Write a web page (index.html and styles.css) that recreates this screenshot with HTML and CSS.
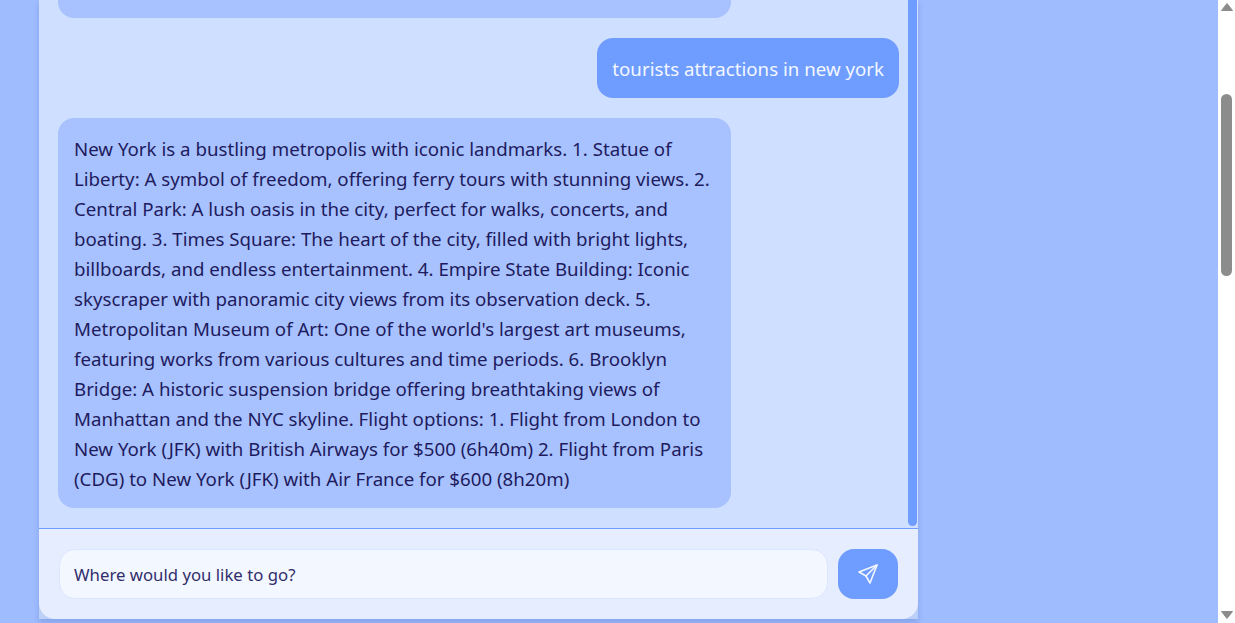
FILE: index.html
```html
<!DOCTYPE html>
<html lang="en">
<head>
    <meta charset="UTF-8">
    <meta name="viewport" content="width=device-width, initial-scale=1.0">
    <title>Travel Chat</title>
    <link rel="stylesheet" href="styles.css">
</head>
<body>
    <div class="page">
        <div class="chat-card">
            <div class="messages">
                <div class="bubble bot">Here are some places you may enjoy on your trip, a</div>
                <div class="bubble user">tourists attractions in new york</div>
                <div class="bubble bot">New York is a bustling metropolis with iconic landmarks. 1. Statue of Liberty: A symbol of freedom, offering ferry tours with stunning views. 2. Central Park: A lush oasis in the city, perfect for walks, concerts, and boating. 3. Times Square: The heart of the city, filled with bright lights, billboards, and endless entertainment. 4. Empire State Building: Iconic skyscraper with panoramic city views from its observation deck. 5. Metropolitan Museum of Art: One of the world's largest art museums, featuring works from various cultures and time periods. 6. Brooklyn Bridge: A historic suspension bridge offering breathtaking views of Manhattan and the NYC skyline. Flight options: 1. Flight from London to New York (JFK) with British Airways for $500 (6h40m) 2. Flight from Paris (CDG) to New York (JFK) with Air France for $600 (8h20m)</div>
                <div class="chat-scrollbar"></div>
            </div>
            <form class="input-bar">
                <input class="chat-input" type="text" placeholder="Where would you like to go?">
                <button class="send-btn" type="button" aria-label="Send">
                    <svg width="24" height="24" viewBox="0 0 24 24" fill="none" stroke="currentColor" stroke-width="1.6" stroke-linecap="round" stroke-linejoin="round">
                        <path d="M21 3 L3 10 L10 14 L14 21 Z"></path>
                        <path d="M21 3 L10 14"></path>
                    </svg>
                </button>
            </form>
        </div>
    </div>
    <div class="page-scrollbar">
        <svg class="arrow" width="14" height="10" viewBox="0 0 14 10"><path d="M7 1.5 L12.5 8.5 H1.5 Z"></path></svg>
        <div class="track"><div class="thumb"></div></div>
        <svg class="arrow" width="14" height="10" viewBox="0 0 14 10"><path d="M7 8.5 L12.5 1.5 H1.5 Z"></path></svg>
    </div>
</body>
</html>
```

FILE: styles.css
```css
* {
    box-sizing: border-box;
}
html, body {
    height: 100%;
}
body {
    margin: 0;
    display: flex;
    overflow: hidden;
    background: #9fbcff;
    font-family: "Noto Sans", "Open Sans", sans-serif;
    font-size: 18.7px;
    line-height: 30px;
}
.page {
    flex: 1;
    min-width: 0;
    padding: 0 300px 4px 39px;
    height: 100%;
}
.chat-card {
    width: 879px;
    height: 100%;
    display: flex;
    flex-direction: column;
    background: #bccff7;
    box-shadow: 0 4px 6px rgba(50, 70, 140, 0.2);
}
.messages {
    position: relative;
    height: 529px;
    flex-shrink: 0;
    overflow: hidden;
    display: flex;
    flex-direction: column;
    justify-content: flex-end;
    gap: 20px;
    padding: 0 19px 20px;
    background: #cfdfff;
    border-bottom: 1px solid #6f9cff;
}
.bubble {
    flex-shrink: 0;
    padding: 16px 15px 14px;
    border-radius: 16px;
}
.bot {
    align-self: flex-start;
    width: 673px;
    padding-left: 16px;
    background: #a8c2ff;
    color: #1e1b5e;
}
.user {
    align-self: flex-end;
    background: #6f9cff;
    color: #f3f7ff;
}
.chat-scrollbar {
    position: absolute;
    top: 0;
    right: 1px;
    bottom: 2px;
    width: 9px;
    background: #6f9cff;
    border-radius: 0 0 5px 5px;
}
.input-bar {
    flex: 1;
    display: flex;
    gap: 10px;
    padding: 20px;
    background: #e5edff;
    border-radius: 0 0 16px 16px;
}
.chat-input {
    flex: 1;
    min-width: 0;
    height: 50px;
    padding: 0 15px 0 14px;
    border: 1px solid #dbe6ff;
    border-radius: 16px;
    background: #f3f7ff;
    font: inherit;
    font-size: 16.75px;
}
.chat-input::placeholder {
    color: #312e6b;
    opacity: 1;
}
.send-btn {
    width: 60px;
    height: 50px;
    display: flex;
    align-items: center;
    justify-content: center;
    border: none;
    border-radius: 16px;
    background: #6f9cff;
    color: #f3f7ff;
}
.page-scrollbar {
    width: 17px;
    flex-shrink: 0;
    display: flex;
    flex-direction: column;
    align-items: center;
    background: #fff;
}
.arrow {
    flex-shrink: 0;
    margin: 2px 0 3px;
    fill: #8c8c8c;
    stroke: #8c8c8c;
    stroke-linejoin: round;
}
.track {
    flex: 1;
    width: 100%;
    display: flex;
    justify-content: center;
}
.thumb {
    width: 11px;
    height: 182px;
    margin-top: 79px;
    background: #8c8c8c;
    border-radius: 6px;
}
```
